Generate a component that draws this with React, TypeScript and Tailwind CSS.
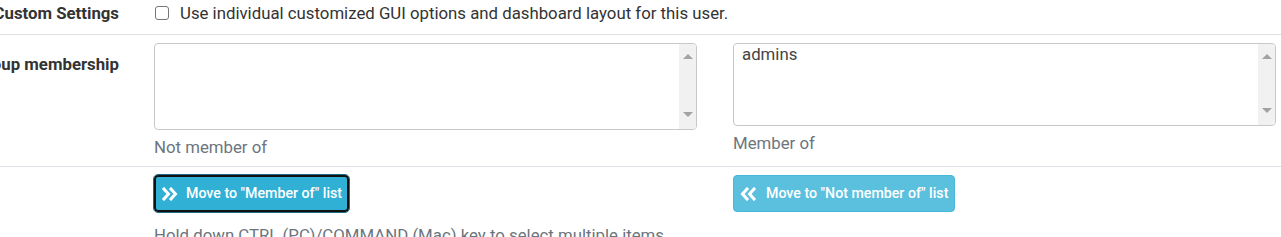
import React from "react";

function Chevrons({ dir }: { dir: "right" | "left" }) {
  return (
    <svg width="17" height="14" viewBox="0 0 17 14" className="shrink-0">
      {dir === "right" ? (
        <g fill="none" stroke="white" strokeWidth="3" strokeLinecap="square" strokeLinejoin="miter">
          <polyline points="3,2 7.5,7 3,12" />
          <polyline points="10,2 14.5,7 10,12" />
        </g>
      ) : (
        <g fill="none" stroke="white" strokeWidth="3" strokeLinecap="square" strokeLinejoin="miter">
          <polyline points="7,2 2.5,7 7,12" />
          <polyline points="14,2 9.5,7 14,12" />
        </g>
      )}
    </svg>
  );
}

function ListBox({ items, heightClass, downOffset }: { items: string[]; heightClass: string; downOffset: string }) {
  return (
    <div className={`flex w-[543px] ${heightClass} overflow-hidden rounded-[4px] border border-[#c8c8c8] bg-white`}>
      <div className="flex-1 px-[8px] pt-[0px] text-[16.8px] leading-[20px] text-[#444]">
        {items.map((i) => (
          <div key={i}>{i}</div>
        ))}
      </div>
      <div className={`flex w-[17px] flex-col items-center justify-between bg-[#f1f1f1] pt-[10px] ${downOffset}`}>
        <div className="h-0 w-0 border-x-[5px] border-b-[5px] border-x-transparent border-b-[#a3a3a3]" />
        <div className="h-0 w-0 border-x-[5px] border-t-[5px] border-x-transparent border-t-[#a3a3a3]" />
      </div>
    </div>
  );
}

export default function App() {
  return (
    <div className="w-[1281px] overflow-hidden bg-white font-['Roboto',sans-serif] text-[#212529]">
      {/* Row 1 */}
      <div className="flex h-[35px] items-start border-b border-[#dee2e6]">
        <div className="flex w-[119px] shrink-0 justify-end pt-[2px]">
          <span className="whitespace-nowrap text-[16.8px] font-bold leading-[22px] text-[#333]">Custom Settings</span>
        </div>
        <div className="ml-[36px] flex items-center gap-[11px] pt-[2px]">
          <span className="block h-[14px] w-[14px] rounded-[3px] border border-[#767676] bg-white" />
          <span className="whitespace-nowrap text-[16.8px] leading-[22px] text-[#333]">
            Use individual customized GUI options and dashboard layout for this user.
          </span>
        </div>
      </div>

      {/* Row 2 */}
      <div className="flex h-[132px] items-start border-b border-[#dee2e6]">
        <div className="flex w-[119px] shrink-0 justify-end pt-[18px]">
          <span className="whitespace-nowrap text-[16.8px] font-bold leading-[22px] text-[#333]">Group membership</span>
        </div>
        <div className="ml-[35px] flex gap-[36px] pt-[8px]">
          <div className="flex flex-col">
            <ListBox items={[]} heightClass="h-[87px]" downOffset="pb-[12px]" />
            <div className="mt-[6px] text-[16.8px] leading-[22px] text-[#6c757d]">Not member of</div>
          </div>
          <div className="flex flex-col">
            <ListBox items={["admins"]} heightClass="h-[83px]" downOffset="pb-[12px]" />
            <div className="mt-[6px] text-[16.8px] leading-[22px] text-[#6c757d]">Member of</div>
          </div>
        </div>
      </div>

      {/* Row 3 */}
      <div className="flex items-start">
        <div className="w-[119px] shrink-0" />
        <div className="ml-[35px] flex flex-col pt-[8px]">
          <div className="flex gap-[36px]">
            <div className="w-[543px]">
              <button className="flex h-[37px] items-center gap-[8px] rounded-[4px] border-[2px] border-[#111] bg-[#31b0d5] pl-[5px] pr-[5px] text-[14.2px] font-medium text-white outline outline-1 outline-[#1b6d85]">
                <Chevrons dir="right" />
                <span className="whitespace-nowrap">Move to "Member of" list</span>
              </button>
            </div>
            <div className="w-[543px]">
              <button className="flex h-[37px] items-center gap-[9px] rounded-[4px] border border-[#46b8da] bg-[#5bc0de] px-[6px] text-[14.2px] font-medium text-white">
                <Chevrons dir="left" />
                <span className="whitespace-nowrap">Move to "Not member of" list</span>
              </button>
            </div>
          </div>
          <div className="mt-[12px] whitespace-nowrap text-[16.8px] leading-[22px] text-[#6c757d]">
            Hold down CTRL (PC)/COMMAND (Mac) key to select multiple items.
          </div>
        </div>
      </div>
    </div>
  );
}
